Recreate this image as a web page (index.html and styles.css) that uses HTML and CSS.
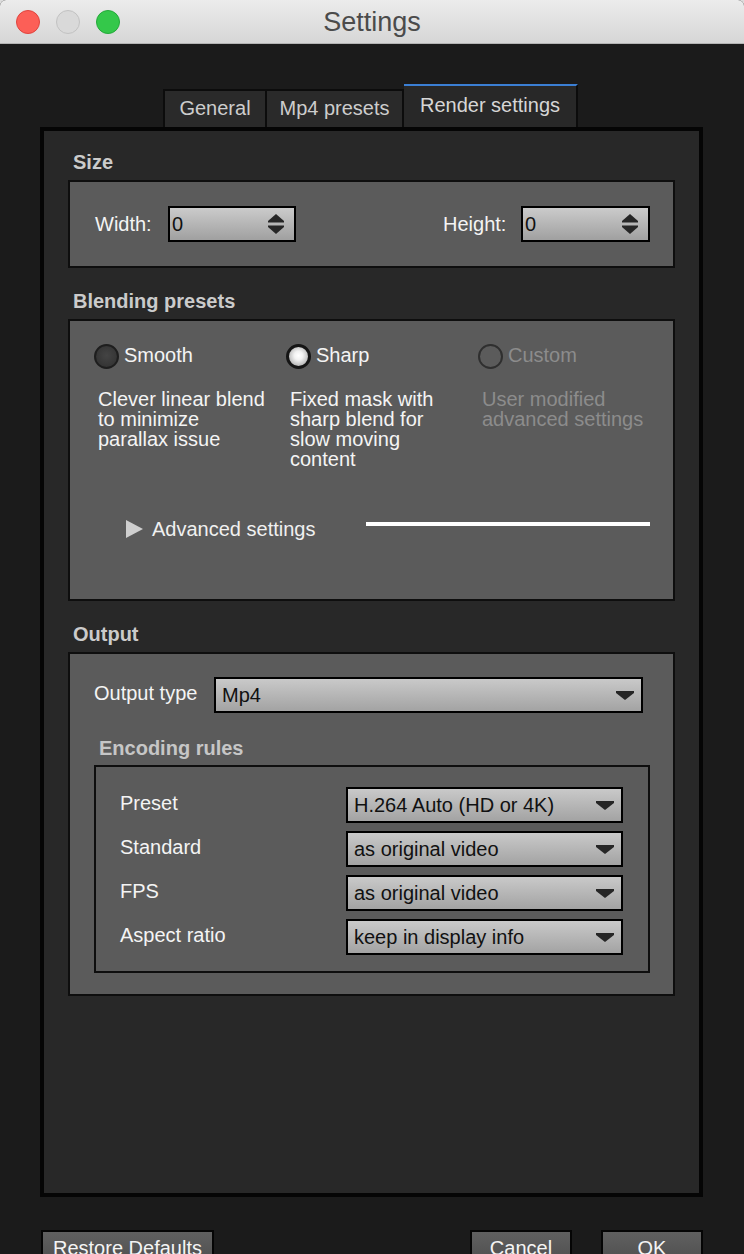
FILE: index.html
```html
<!DOCTYPE html>
<html lang="en">
<head>
<meta charset="utf-8">
<title>Settings</title>
<link rel="stylesheet" href="styles.css">
</head>
<body>
<div class="window">
  <header class="titlebar">
    <div class="lights">
      <span class="light light-close"></span>
      <span class="light light-min"></span>
      <span class="light light-max"></span>
    </div>
    <div class="title">Settings</div>
    <div></div>
  </header>

  <nav class="tabs">
    <div class="tab tab-general">General</div>
    <div class="tab tab-mp4">Mp4 presets</div>
    <div class="tab tab-render active">Render settings</div>
  </nav>

  <main class="panel">
    <section class="section">
      <h2 class="section-title">Size</h2>
      <div class="group size-group">
        <div class="field">
          <span class="field-label label-width">Width:</span>
          <div class="spin spin-width">
            <span class="value">0</span>
            <svg class="spin-arrows" width="20" height="22" viewBox="0 0 20 22"><path d="M10 1 L18 8 L18 9.5 L2 9.5 L2 8 Z" fill="#262626"/><path d="M2 12.5 L18 12.5 L18 14 L10 21 L2 14 Z" fill="#262626"/></svg>
          </div>
        </div>
        <div class="field">
          <span class="field-label label-height">Height:</span>
          <div class="spin spin-height">
            <span class="value">0</span>
            <svg class="spin-arrows" width="20" height="22" viewBox="0 0 20 22"><path d="M10 1 L18 8 L18 9.5 L2 9.5 L2 8 Z" fill="#262626"/><path d="M2 12.5 L18 12.5 L18 14 L10 21 L2 14 Z" fill="#262626"/></svg>
          </div>
        </div>
      </div>
    </section>

    <section class="section">
      <h2 class="section-title">Blending presets</h2>
      <div class="group blend-group">
        <div class="presets">
          <div class="preset">
            <div class="radio-row"><span class="radio radio-off"></span><span class="radio-label">Smooth</span></div>
            <p class="preset-desc">Clever linear blend<br>to minimize<br>parallax issue</p>
          </div>
          <div class="preset">
            <div class="radio-row"><span class="radio radio-on"></span><span class="radio-label">Sharp</span></div>
            <p class="preset-desc">Fixed mask with<br>sharp blend for<br>slow moving<br>content</p>
          </div>
          <div class="preset disabled">
            <div class="radio-row"><span class="radio radio-disabled"></span><span class="radio-label">Custom</span></div>
            <p class="preset-desc">User modified<br>advanced settings</p>
          </div>
        </div>
        <div class="advanced">
          <div class="adv-toggle">
            <svg class="adv-arrow" width="17" height="18" viewBox="0 0 17 18"><path d="M0 0 L17 9 L0 18 Z" fill="#cfcfcf"/></svg>
            <span>Advanced settings</span>
          </div>
          <div class="adv-line"></div>
        </div>
      </div>
    </section>

    <section class="section">
      <h2 class="section-title">Output</h2>
      <div class="group output-group">
        <div class="output-row">
          <span class="field-label output-label">Output type</span>
          <div class="combo combo-wide">
            <span>Mp4</span>
            <svg class="combo-arrow" width="20" height="11" viewBox="0 0 20 11"><path d="M1 1 H19 V3 L10 10 L1 3 Z" fill="#262626"/></svg>
          </div>
        </div>
        <h3 class="sub-title">Encoding rules</h3>
        <div class="encoding">
          <span class="enc-label">Preset</span>
          <div class="combo"><span>H.264 Auto (HD or 4K)</span><svg class="combo-arrow" width="20" height="11" viewBox="0 0 20 11"><path d="M1 1 H19 V3 L10 10 L1 3 Z" fill="#262626"/></svg></div>
          <span class="enc-label">Standard</span>
          <div class="combo"><span>as original video</span><svg class="combo-arrow" width="20" height="11" viewBox="0 0 20 11"><path d="M1 1 H19 V3 L10 10 L1 3 Z" fill="#262626"/></svg></div>
          <span class="enc-label">FPS</span>
          <div class="combo"><span>as original video</span><svg class="combo-arrow" width="20" height="11" viewBox="0 0 20 11"><path d="M1 1 H19 V3 L10 10 L1 3 Z" fill="#262626"/></svg></div>
          <span class="enc-label">Aspect ratio</span>
          <div class="combo"><span>keep in display info</span><svg class="combo-arrow" width="20" height="11" viewBox="0 0 20 11"><path d="M1 1 H19 V3 L10 10 L1 3 Z" fill="#262626"/></svg></div>
        </div>
      </div>
    </section>
  </main>

  <footer class="buttons">
    <button class="btn btn-restore">Restore Defaults</button>
    <button class="btn btn-cancel">Cancel</button>
    <button class="btn btn-ok">OK</button>
  </footer>
</div>
</body>
</html>
```

FILE: styles.css
```css
* {
  box-sizing: border-box;
}

html, body {
  margin: 0;
  padding: 0;
  background: #dcdcdc;
  overflow: hidden;
}

body {
  font-family: "Liberation Sans", Arial, Helvetica, sans-serif;
  font-size: 20px;
  line-height: 20px;
  color: #f2f2f2;
}

.window {
  width: 744px;
  height: 1254px;
  background: #1b1b1b;
  border-radius: 6px 6px 0 0;
  overflow: hidden;
  display: flex;
  flex-direction: column;
}

/* Title bar */
.titlebar {
  height: 44px;
  flex: none;
  display: grid;
  grid-template-columns: 1fr auto 1fr;
  align-items: center;
  background: linear-gradient(#ececec, #d6d6d6);
  border-bottom: 1px solid #b4b4b4;
}

.lights {
  display: flex;
  gap: 16px;
  padding-left: 16px;
}

.light {
  width: 24px;
  height: 24px;
  border-radius: 50%;
  display: block;
}

.light-close {
  background: #fc5f57;
  border: 1px solid #e0443e;
}

.light-min {
  background: #d9d9d9;
  border: 1px solid #c2c2c2;
}

.light-max {
  background: #34c84a;
  border: 1px solid #24a93a;
}

.title {
  font-size: 27px;
  line-height: 30px;
  color: #4b4b4b;
}

/* Tabs */
.tabs {
  height: 83px;
  flex: none;
  display: flex;
  align-items: flex-end;
  padding-left: 163px;
}

.tab {
  height: 38px;
  background: #2a2a2a;
  border: 2px solid #0c0c0c;
  border-bottom: none;
  color: #cdcdcd;
  display: flex;
  align-items: center;
  justify-content: center;
  padding-bottom: 3px;
}

.tab-general {
  width: 104px;
}

.tab-mp4 {
  width: 137px;
  border-left: none;
}

.tab-render {
  width: 174px;
  border-left: none;
}

.tab.active {
  height: 43px;
  border-top: 2px solid #3b7fd4;
  background: #282828;
  color: #d6d6d6;
  padding-bottom: 4px;
}

/* Panel */
.panel {
  height: 1070px;
  flex: none;
  margin: 0 41px 0 40px;
  background: #282828;
  border: 4px solid #050505;
  padding: 21px 20px 0;
}

.section + .section {
  margin-top: 23px;
}

.section-title {
  margin: 0 0 8px 9px;
  font-size: 20px;
  line-height: 20px;
  font-weight: bold;
  color: #cbcbcb;
}

.group {
  background: #5b5b5b;
  border: 2px solid #0e0e0e;
  margin: 0 4px;
}

/* Size */
.size-group {
  display: flex;
  justify-content: space-between;
  align-items: center;
  padding: 24px 23px 24px 25px;
}

.field {
  display: flex;
  align-items: center;
}

.field-label {
  color: #f4f4f4;
}

.label-width {
  width: 73px;
}

.label-height {
  width: 78px;
}

.spin {
  height: 36px;
  border: 2px solid #000;
  background: linear-gradient(#cbcbcb, #a0a0a0);
  display: flex;
  align-items: center;
  justify-content: space-between;
  padding: 0 8px 0 2px;
  color: #111;
}

.spin-width {
  width: 128px;
}

.spin-height {
  width: 129px;
}

.spin-arrows {
  display: block;
}

/* Blending presets */
.blend-group {
  padding: 23px 0 60px 24px;
}

.presets {
  display: grid;
  grid-template-columns: 192px 192px 192px;
}

.radio-row {
  height: 25px;
  display: flex;
  align-items: center;
  gap: 5px;
}

.radio {
  width: 25px;
  height: 25px;
  border-radius: 50%;
  flex: none;
}

.radio-off {
  background: radial-gradient(circle at 50% 45%, #444, #353535 70%);
  border: 2px solid #1e1e1e;
}

.radio-on {
  background: radial-gradient(circle at 50% 45%, #ffffff 0%, #f2f2f2 30%, #a8a8a8 85%);
  border: 3px solid #151515;
}

.radio-disabled {
  background: #5b5b5b;
  border: 2px solid #2f2f2f;
}

.radio-label {
  color: #f4f4f4;
  padding-bottom: 3px;
}

.preset-desc {
  margin: 20px 0 0 4px;
  line-height: 20px;
  color: #f4f4f4;
}

.preset.disabled .radio-label,
.preset.disabled .preset-desc {
  color: #8c8c8c;
}

.advanced {
  margin-top: 50px;
  display: flex;
  align-items: flex-start;
  padding-left: 32px;
}

.adv-toggle {
  width: 240px;
  display: flex;
  align-items: center;
  gap: 9px;
  color: #f0f0f0;
}

.adv-arrow {
  display: block;
}

.adv-line {
  width: 284px;
  height: 4px;
  margin-top: 3px;
  background: #ffffff;
}

/* Output */
.output-group {
  padding: 23px 23px 21px 24px;
}

.output-row {
  display: flex;
  align-items: center;
  margin-right: 7px;
}

.output-label {
  width: 120px;
  padding-bottom: 4px;
}

.combo {
  height: 36px;
  border: 2px solid #000;
  background: linear-gradient(#c9c9c9, #a3a3a3);
  display: flex;
  align-items: center;
  justify-content: space-between;
  padding: 0 6px;
  color: #111;
}

.combo-wide {
  flex: 1;
}

.combo-arrow {
  display: block;
}

.sub-title {
  margin: 25px 0 7px 5px;
  font-size: 20px;
  line-height: 20px;
  font-weight: bold;
  color: #c6c6c6;
}

.encoding {
  border: 2px solid #0e0e0e;
  padding: 20px 25px 16px 24px;
  display: grid;
  grid-template-columns: 1fr 277px;
  row-gap: 8px;
  align-items: center;
}

.enc-label {
  color: #f4f4f4;
  padding-bottom: 5px;
}

/* Buttons */
.buttons {
  flex: none;
  margin-top: 33px;
  padding: 0 41px;
  display: flex;
  gap: 29px;
}

.btn {
  height: 36px;
  min-width: 102px;
  padding: 0 10px;
  border: 2px solid #050505;
  background: linear-gradient(#606060, #4e4e4e);
  color: #f4f4f4;
  font-family: "Liberation Sans", Arial, Helvetica, sans-serif;
  font-size: 20px;
  line-height: 20px;
}

.btn-cancel {
  margin-left: auto;
}
```
